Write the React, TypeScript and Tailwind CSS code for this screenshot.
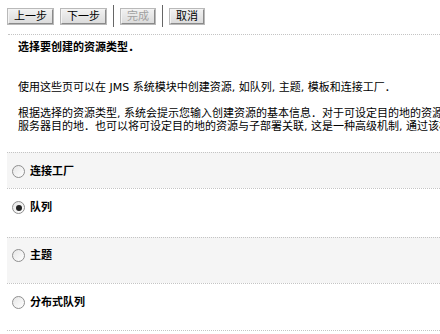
import React, { useState } from 'react';

const font = 'font-["Tahoma","DejaVu_Sans","Noto_Sans_CJK_SC",sans-serif]';

const ToolButton: React.FC<{ label: string; disabled?: boolean }> = ({ label, disabled }) => (
  <button
    disabled={disabled}
    className={`h-[15px] px-[5px] text-[11px] leading-[13px] border border-t-[#f4f4f4] border-l-[#f4f4f4] border-r-[#8a8a8a] border-b-[#8a8a8a] outline outline-1 outline-[#b9b9b9] bg-gradient-to-b from-[#f0f0f0] to-[#dcdcdc] ${
      disabled ? 'text-[#a0a0a0]' : 'text-black'
    }`}
  >
    {label}
  </button>
);

const Separator = () => <div className="w-px h-[22px] bg-[#666]" />;

const Radio: React.FC<{ checked: boolean }> = ({ checked }) => (
  <div className="w-[13px] h-[13px] rounded-full border border-[#8f8f8f] bg-gradient-to-br from-[#e6e6e6] to-white flex items-center justify-center shrink-0">
    {checked && <div className="w-[6px] h-[6px] rounded-full bg-[#222]" />}
  </div>
);

const types = [
  { id: 'cf', label: '连接工厂', h: 'h-[36px]', bg: 'bg-[#f5f5f5]', pt: 'pt-[12px]' },
  { id: 'queue', label: '队列', h: 'h-[49px]', bg: 'bg-white', pt: 'pt-[12px]' },
  { id: 'topic', label: '主题', h: 'h-[46px]', bg: 'bg-[#f5f5f5]', pt: 'pt-[11px]' },
  { id: 'dq', label: '分布式队列', h: 'h-[48px]', bg: 'bg-white', pt: 'pt-[12px]' },
];

export default function App() {
  const [selected, setSelected] = useState('queue');

  return (
    <div className={`w-[440px] h-[334px] overflow-hidden bg-white text-black ${font}`}>
      {/* toolbar */}
      <div className="flex items-center h-[34px] pl-[8px] pb-[2px]">
        <div className="flex items-center gap-[8px]">
          <ToolButton label="上一步" />
          <ToolButton label="下一步" />
        </div>
        <div className="mx-[7px] flex items-center"><Separator /></div>
        <ToolButton label="完成" disabled />
        <div className="mx-[7px] flex items-center"><Separator /></div>
        <ToolButton label="取消" />
      </div>

      <div className="ml-[8px] border-t border-dotted border-[#c4c4c4]" />

      <div className="pl-[18px] pt-[6px] text-[11px] leading-[13px] whitespace-nowrap">
        <p className="font-bold">选择要创建的资源类型．</p>
        <p className="mt-[27px]">使用这些页可以在 JMS 系统模块中创建资源, 如队列, 主题, 模板和连接工厂．</p>
        <p className="mt-[13px]">
          根据选择的资源类型, 系统会提示您输入创建资源的基本信息．对于可设定目的地的资源, 如独立队列和主题, 连接工厂, 还可以选择适当的
          <br />
          服务器目的地．也可以将可设定目的地的资源与子部署关联, 这是一种高级机制, 通过该机制可以将 JMS 模块资源分组．
        </p>
      </div>

      <div className="ml-[7px] mt-[19px]">
        {types.map(t => (
          <label
            key={t.id}
            onClick={() => setSelected(t.id)}
            className={`flex items-start gap-[5px] pl-[5px] border-t border-dotted border-[#c4c4c4] ${t.h} ${t.bg} ${t.pt} last:border-b`}
          >
            <Radio checked={selected === t.id} />
            <span className="text-[11px] leading-[13px] font-bold">{t.label}</span>
          </label>
        ))}
      </div>
    </div>
  );
}
